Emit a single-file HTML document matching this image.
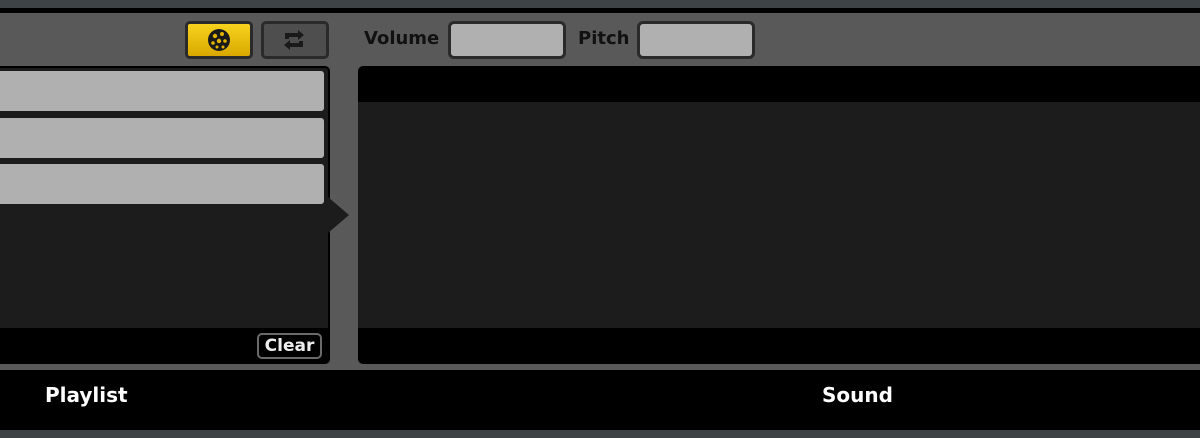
<!DOCTYPE html>
<html><head><style>
body{margin:0;width:1200px;height:438px;overflow:hidden;background:#595959;position:relative;font-family:"DejaVu Sans","Liberation Sans",sans-serif;}
div{position:absolute;box-sizing:border-box;}
.t{font-weight:bold;}
</style></head><body>
<div style="left:0;top:0;width:1200px;height:8px;background:#3e4446"></div>
<div style="left:0;top:8px;width:1200px;height:5px;background:#000"></div>
<div style="left:185px;top:21px;width:68px;height:38px;background:linear-gradient(#f7d21e,#d9a800);border:3px solid #2a2a2a;border-radius:5px"></div>
<svg style="position:absolute;left:205px;top:26px" width="28" height="28" viewBox="0 0 28 28"><circle cx="14" cy="14" r="11" fill="#1a1a1a"/><circle cx="10" cy="10" r="2.2" fill="#e0b400"/><circle cx="17" cy="8" r="2" fill="#e0b400"/><circle cx="14" cy="15" r="2.2" fill="#e0b400"/><circle cx="20" cy="15" r="1.8" fill="#e0b400"/><circle cx="8" cy="17" r="1.8" fill="#e0b400"/><circle cx="12" cy="21" r="1.5" fill="#e0b400"/><circle cx="18" cy="21" r="1.5" fill="#e0b400"/></svg>
<div style="left:261px;top:21px;width:68px;height:38px;background:#4e4e4e;border:3px solid #2a2a2a;border-radius:5px"></div>
<svg style="position:absolute;left:282px;top:28px" width="24" height="24" viewBox="0 0 24 24"><path d="M3 11 V5 H16 V2 L22 7 L16 12 V9 H7 V11Z M21 13 V19 H8 V22 L2 17 L8 12 V15 H17 V13Z" fill="#1a1a1a"/></svg>
<div class="t" style="left:364px;top:28px;font-size:18px;color:#111">Volume</div>
<div style="left:448px;top:21px;width:118px;height:38px;background:#b0b0b0;border:3px solid #2a2a2a;border-radius:6px"></div>
<div class="t" style="left:578px;top:28px;font-size:18px;color:#111">Pitch</div>
<div style="left:637px;top:21px;width:118px;height:38px;background:#b0b0b0;border:3px solid #2a2a2a;border-radius:6px"></div>
<div style="left:0;top:66px;width:330px;height:298px;background:#1c1c1c;border:2px solid #000;border-left:none;border-radius:0 5px 5px 0"></div>
<div style="left:0;top:71px;width:324px;height:40px;background:#b0b0b0;border-radius:0 3px 3px 0"></div>
<div style="left:0;top:118px;width:324px;height:40px;background:#b0b0b0;border-radius:0 3px 3px 0"></div>
<div style="left:0;top:164px;width:324px;height:40px;background:#b0b0b0;border-radius:0 3px 3px 0"></div>
<div style="left:0;top:328px;width:330px;height:36px;background:#000;border-radius:0 0 5px 0"></div>
<div class="t" style="left:257px;top:333px;width:65px;height:26px;border:2px solid #6a6a6a;border-radius:5px;color:#eee;font-size:17px;text-align:center;line-height:22px">Clear</div>
<svg style="position:absolute;left:328px;top:197px" width="22" height="36"><path d="M0 0 L21 18 L0 36Z" fill="#1c1c1c"/></svg>
<div style="left:358px;top:66px;width:842px;height:298px;background:#000;border-radius:5px 0 0 5px"></div>
<div style="left:358px;top:102px;width:842px;height:226px;background:#1c1c1c"></div>
<div style="left:0;top:370px;width:1200px;height:60px;background:#000"></div>
<div class="t" style="left:45px;top:383px;font-size:20px;color:#fff">Playlist</div>
<div class="t" style="left:822px;top:383px;font-size:20px;color:#fff">Sound</div>
<div style="left:0;top:430px;width:1200px;height:8px;background:#3e4446"></div>
</body></html>
